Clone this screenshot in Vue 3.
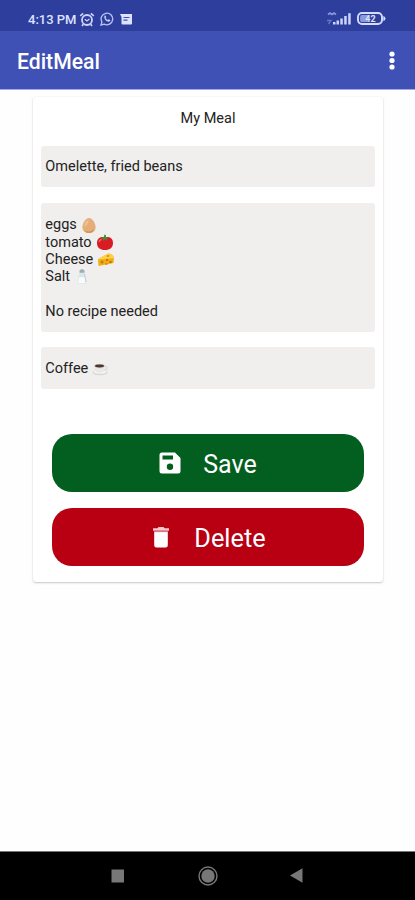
<script setup>
const ingredients = [
  { name: 'eggs', icon: 'egg' },
  { name: 'tomato', icon: 'tomato' },
  { name: 'Cheese', icon: 'cheese' },
  { name: 'Salt', icon: 'salt' },
]
</script>

<template>
  <div class="screen">
    <div class="status">
      <div class="status-left">
        <span class="time">4:13 PM</span>
        <svg class="alarm" width="16" height="15" viewBox="0 0 16 15" fill="none" stroke="#cdd5fb">
          <circle cx="8" cy="8" r="5" stroke-width="1.8" />
          <path d="M1.2 3.8 4.2 1.3M14.8 3.8 11.8 1.3M4.3 12.2 3 14M11.7 12.2 13 14" stroke-width="1.6" />
          <path d="M5.8 7.2 8 9l2.4-2" stroke-width="1.2" />
        </svg>
        <svg class="whatsapp" width="14" height="14" viewBox="0 0 14 14">
          <path d="M1 13 1.9 9.9A5.8 5.8 0 1 1 4.2 12.1Z" fill="none" stroke="#b9c4f4" stroke-width="1.3" />
          <path d="M4.5 3.8c.7-.6 1.1-.4 1.4.4l.3.8-.6 1c.5 1 1.3 1.7 2.3 2.1l.9-.8 1.5.8c.2 1-1 1.8-2 1.6C5.700 9.200 3.700 6.400 4.500 3.800Z" fill="#c6d0f8" />
        </svg>
        <svg class="message" width="12" height="11" viewBox="0 0 12 11">
          <path d="M0 0h12v9.500q0 1-1 1H2.500q-1 0-1-1V3Z" fill="#dce2ff" />
          <path d="M3.500 3.500h6M3.500 6.200h4" stroke="#4050b4" stroke-width="1.200" />
        </svg>
      </div>
      <div class="status-right">
        <svg width="25" height="14" viewBox="0 0 25 14">
          <path d="M1 2.500 3 1l2 1.500L7 1l2 1.500" fill="none" stroke="#8996dd" stroke-width="1.600" />
          <path d="M0 8.500h4L1.500 12" fill="none" stroke="#6775c8" stroke-width="1.300" />
          <path d="M6 10h2.500v2.500H6zM9.500 8.500H12v4H9.500zM13.300 6.500h2.500v6h-2.500zM17.200 4h2.500v8.500h-2.500zM21.200 1.300h2.500v11.200h-2.500z" fill="#cbd3fa" />
        </svg>
        <svg class="battery" width="29" height="14" viewBox="0 0 29 14">
          <rect x="1" y="1" width="24" height="11" rx="4" fill="#2e3e9d" stroke="#d5dcff" stroke-width="1.900" />
          <path d="M4 3h7v7H4q-1-1-1-3.500T4 3Z" fill="#8c9ade" />
          <path d="M26.300 4q2.200.5 2.200 2.500t-2.200 2.500Z" fill="#d5dcff" />
          <text x="13.500" y="9.800" text-anchor="middle" font-size="9" font-weight="700" fill="#e0e5ff">42</text>
        </svg>
      </div>
    </div>
    <header class="app-bar">
      <h1>EditMeal</h1>
      <svg class="more" width="6" height="20" viewBox="0 0 6 20" fill="#fff">
        <circle cx="3" cy="3" r="2.600" /><circle cx="3" cy="9.500" r="2.600" /><circle cx="3" cy="16" r="2.600" />
      </svg>
    </header>
    <main>
      <section class="card">
        <h2>My Meal</h2>
        <div class="field single meal">Omelette, fried beans</div>
        <div class="field recipe">
          <div v-for="item in ingredients" :key="item.name" class="line">
            <span>{{ item.name }}</span>
            <svg v-if="item.icon === 'egg'" class="food" width="16" height="17" viewBox="0 0 16 17">
              <path d="M8 1C5 1 1.400 6.200 1.400 10.200 1.400 14 4.400 16 8 16s6.600-2 6.600-5.800C14.600 6.200 11 1 8 1Z" fill="#e5ae78" />
              <path d="M7.500 2.500C5 3.600 3.300 7 3.300 9.800c2-.5 5-4.800 4.200-7.300Z" fill="#f0c292" />
              <path d="M3 13c3 2.500 8 1.500 10.500-1-1 2.700-3 4-5.500 4s-4-1-5-3Z" fill="#cf915d" />
            </svg>
            <svg v-else-if="item.icon === 'tomato'" class="food" width="18" height="17" viewBox="0 0 18 17">
              <path d="M9 3.500C4 2 1 5 1 9c0 4.500 3 7 8 7s8-2.500 8-7c0-4-3-7-8-5.500Z" fill="#d91c24" />
              <path d="M3 8q.5-2 2.500-2.500" fill="none" stroke="#f4665f" stroke-width="1.300" />
              <path d="M8.300.8h1.500l.2 2.400 3.500.2-2.600 1.200.8 2-2.700-1.400L7 7V4.800L4 4.300l3.800-1.200Z" fill="#4c8939" />
            </svg>
            <svg v-else-if="item.icon === 'cheese'" class="food" width="18" height="17" viewBox="0 0 18 17">
              <path d="M1 8 11.500 2.500Q16 3 17 6.500L16.500 12 1.500 15Z" fill="#f0ae13" />
              <path d="M1 8 11.500 2.500Q16 3 17 6.500Z" fill="#ffd140" />
              <path d="M1 8 17 6.500" stroke="#f8dc65" stroke-width=".8" />
              <g fill="#c77c0c"><circle cx="5" cy="11" r="1.500" /><circle cx="10" cy="9" r="1.200" /><ellipse cx="13.500" cy="11" rx="1.500" ry="1.200" /><ellipse cx="9.500" cy="13" rx="1.300" ry=".7" /><ellipse cx="11" cy="5" rx="1.500" ry=".8" /></g>
            </svg>
            <svg v-else class="food" width="16" height="17" viewBox="0 0 16 17">
              <path d="M5.500 4.500h5l2 9.500q-.2 2-2 2h-5q-2-.2-2-2Z" fill="#d9e7eb" />
              <path d="M5 9.500 4.200 14q0 1.300 1.600 1.300h4.400q1.500-.2 1.300-1.500L10.800 9Z" fill="#f8fbfb" />
              <path d="M5.500 4.800V2.500Q8 0 10.500 2.500v2.300Z" fill="#9eacb4" />
              <path d="M10.500 6 12 14" stroke="#b9d1d9" />
            </svg>
          </div>
          <div class="line blank"></div>
          <div class="line">No recipe needed</div>
        </div>
        <div class="field single drink">
          <span>Coffee</span>
          <svg class="food" width="17" height="15" viewBox="0 0 17 15">
            <ellipse cx="8" cy="11.500" rx="7.500" ry="2.800" fill="#d8d7d5" />
            <ellipse cx="8" cy="10.800" rx="6.500" ry="2" fill="#f5f4f2" />
            <circle cx="13" cy="7" r="2" fill="none" stroke="#dad9d6" stroke-width="1.200" />
            <path d="M2 5q.3 6 4 6.500h4Q13 10 13 5Z" fill="#e9e8e6" />
            <ellipse cx="7.500" cy="5" rx="5.500" ry="2.200" fill="#cfcdca" />
            <ellipse cx="7.500" cy="5" rx="4.500" ry="1.400" fill="#48372f" />
          </svg>
        </div>
        <button class="action save">
          <svg width="22" height="22" viewBox="0 0 22 22">
            <path d="M3 .5h13L21.500 6v13a2.500 2.500 0 0 1-2.500 2.500H3A2.500 2.500 0 0 1 .5 19V3A2.500 2.500 0 0 1 3 .5Z" fill="#fff" />
            <path d="M3.500 3.500h10.500v4H3.500Z" fill="#035f20" /><circle cx="11" cy="14.700" r="3.200" fill="#035f20" />
          </svg>
          <span>Save</span>
        </button>
        <button class="action delete">
          <svg width="16" height="21" viewBox="0 0 16 21" fill="#fff">
            <path d="M1.200 5h13.600v13.300a2.200 2.200 0 0 1-2.200 2.200H3.400a2.200 2.200 0 0 1-2.200-2.200Z" />
            <path d="M0 1.200h4.500L5.500 0h5l1 1.200H16v2.500H0Z" fill="#f4c9ce" /><path d="M1 3.500h14v1.600H1Z" fill="#dc7883" />
          </svg>
          <span>Delete</span>
        </button>
      </section>
    </main>
    <nav>
      <svg width="14" height="14" viewBox="0 0 14 14"><path d="M.5.5h12.500v13H.5Z" fill="#777" /></svg>
      <svg width="20" height="20" viewBox="0 0 20 20"><circle cx="10" cy="10" r="9" fill="none" stroke="#777" stroke-width="1.400" /><circle cx="10" cy="10" r="6.700" fill="#777" /></svg>
      <svg width="13" height="15" viewBox="0 0 13 15"><path d="M0 7.500 12.500.3v14.400Z" fill="#777" /></svg>
    </nav>
  </div>
</template>

<style>
body { margin: 0; background: #fefefe; }
</style>

<style scoped>
.screen { height: 900px; display: flex; flex-direction: column; font-family: Roboto, sans-serif; color: #222; background: #fefefe; overflow: hidden; }
.screen * { box-sizing: border-box; }
svg { display: block; flex: none; }
.status { height: 31px; flex: none; background: #2e3e9d; display: flex; justify-content: space-between; padding: 12px 29px 0 28px; }
.status-left, .status-right { display: flex; align-items: flex-start; }
.time { width: 48px; margin-right: 3px; font-size: 13px; line-height: 15px; font-weight: 500; color: #dce3ff; white-space: nowrap; }
.whatsapp { margin-left: 5px; }
.message { margin: 2px 0 0 6px; }
.battery { margin-left: 5px; }
.app-bar { height: 59px; flex: none; background: #3f51b5; border-bottom: 1px solid #a0abe0; display: flex; justify-content: space-between; align-items: center; padding: 3px 20px 0 17px; }
.more { margin-top: -2px; }
h1 { margin: 0; color: #fff; font-size: 21.200px; font-weight: 500; line-height: 24px; }
main { flex: 1; padding: 7px 32px 0 33px; }
.card { height: 485px; background: #fff; border-radius: 3px; box-shadow: 0 1px 2px #c8c8c8, 0 0 2px #eee; padding: 11px 8px 0; display: flex; flex-direction: column; }
h2 { margin: 0 0 16px; text-align: center; font-size: 14.500px; line-height: 22px; font-weight: 400; }
.field { width: 334px; background: #f0efee; border-radius: 3px; padding-left: 4.300px; font-size: 14.500px; line-height: 17.300px; flex: none; }
.single { height: 41px; display: flex; align-items: center; }
.meal { padding-top: 1px; }
.drink { height: 42px; padding-top: 1px; }
.food { margin-left: 4px; }
.recipe { height: 129px; margin: 16px 0 15px; padding-top: 13.400px; }
.line { height: 17.300px; display: flex; align-items: center; }
.action { width: 312px; height: 58px; flex: none; margin: 0 0 0 11px; border: 0; border-radius: 20px; color: #fff; font: 400 25px/30px Roboto, sans-serif; display: flex; align-items: center; justify-content: center; padding: 3px 0 0; }
.save { background: #035f20; margin-top: 45px; gap: 22px; }
.delete { background: #b90013; margin-top: 16px; gap: 25px; padding-left: 3px; font-size: 25.300px; }
.action svg { margin-top: -3px; }
nav { height: 49px; flex: none; background: #000; border-top: 1px solid #777; display: flex; justify-content: space-between; align-items: center; padding: 0 112px 1px 111px; }
</style>
